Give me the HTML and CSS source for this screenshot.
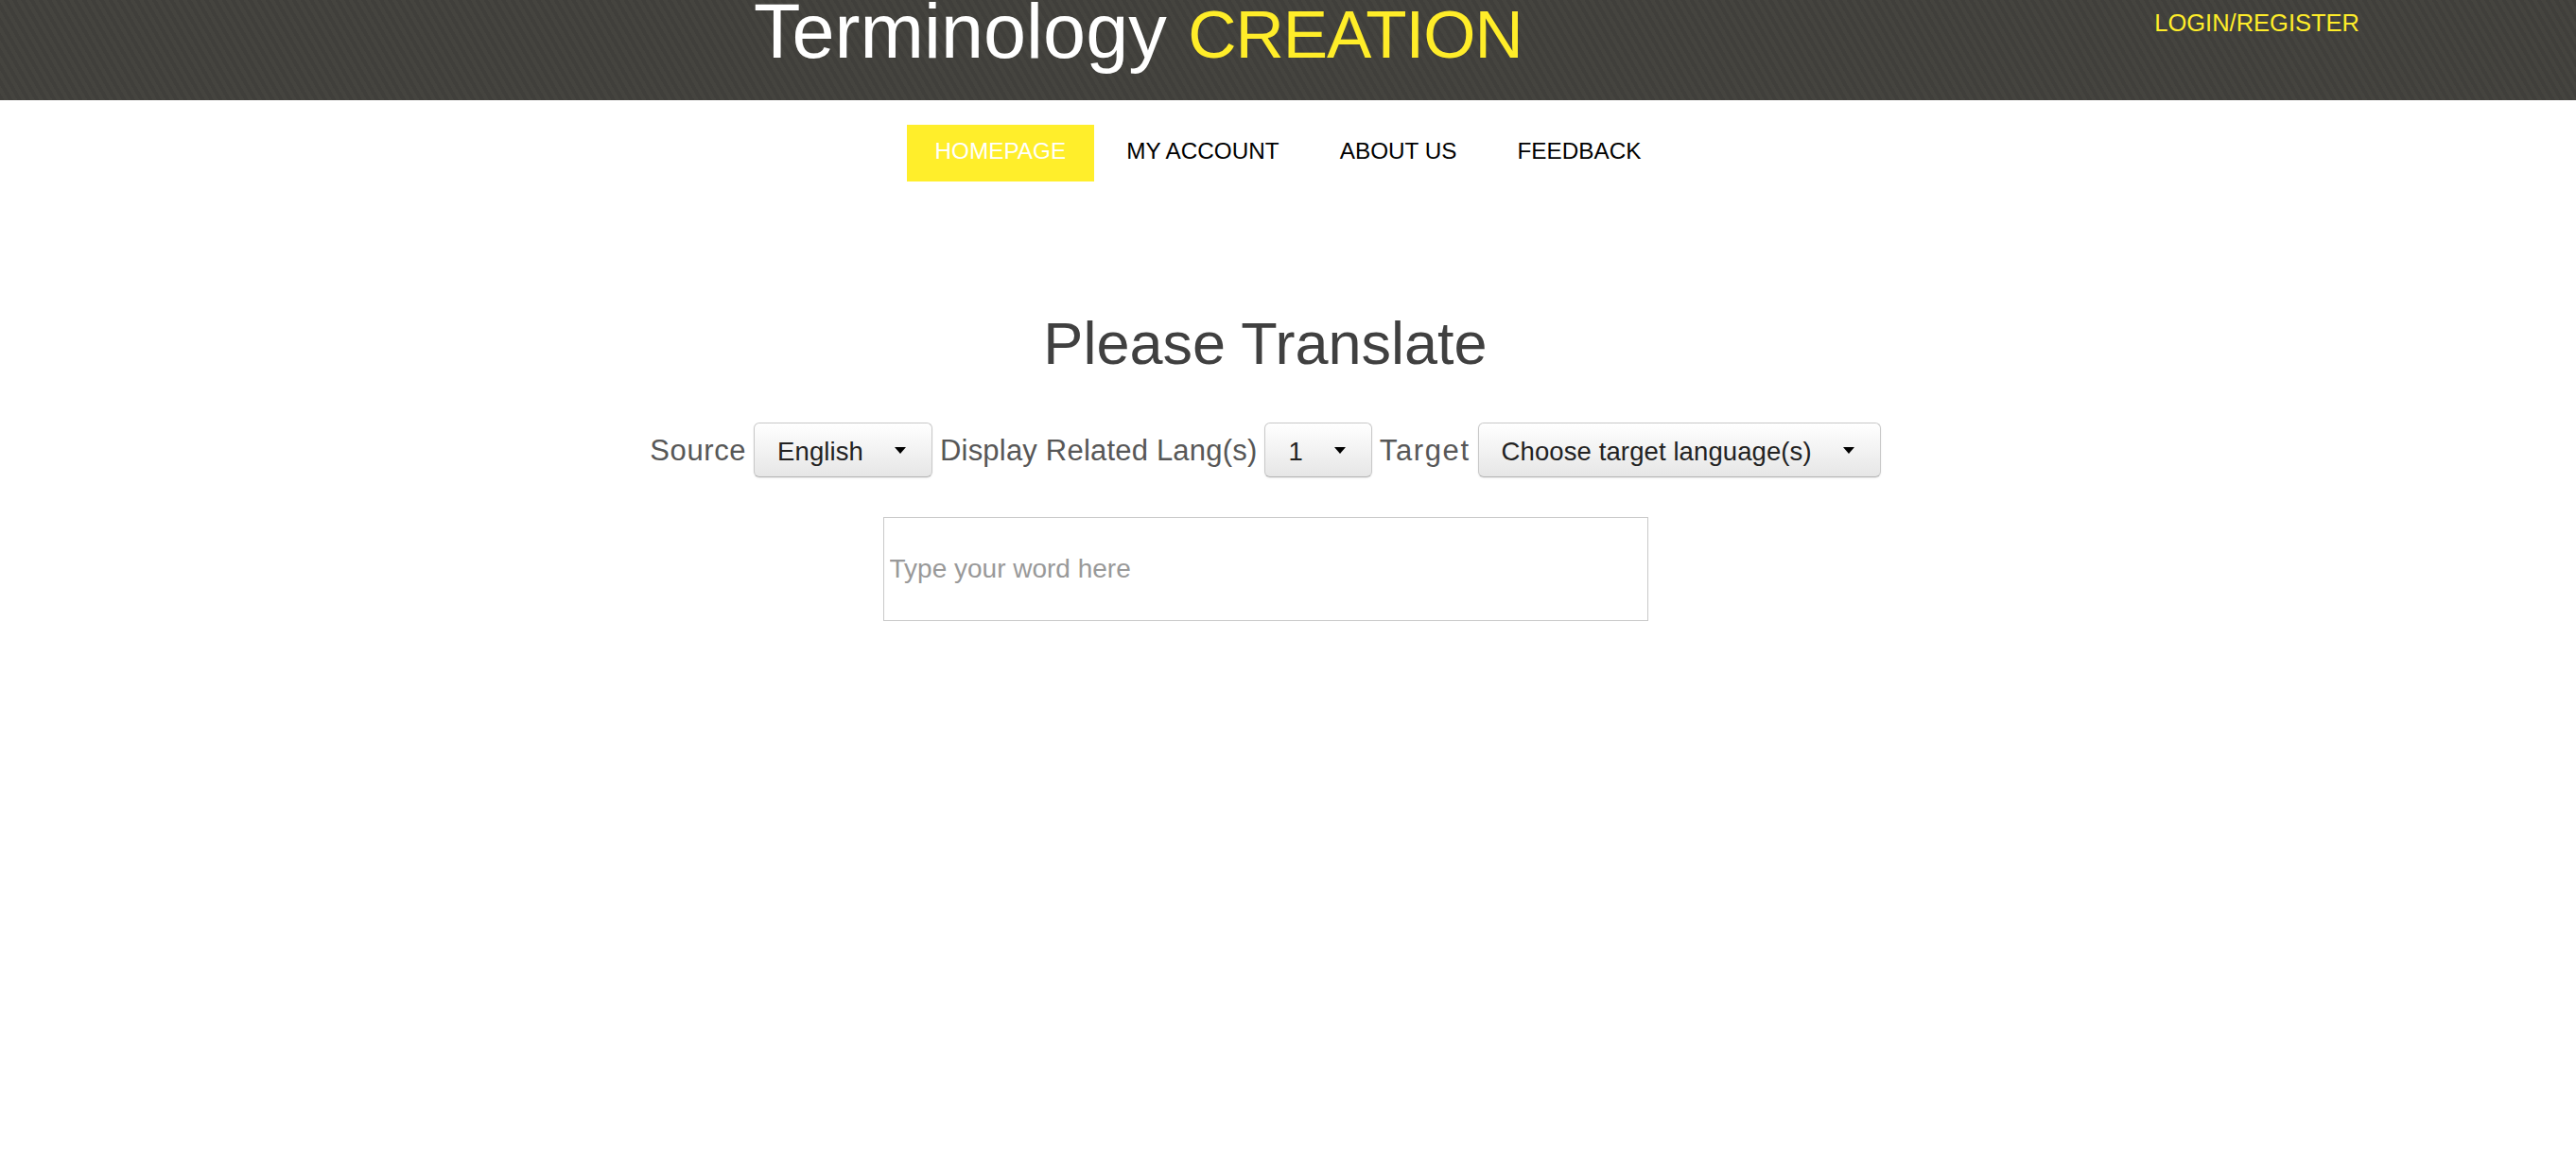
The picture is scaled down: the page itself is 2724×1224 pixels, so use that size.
FILE: index.html
```html
<!DOCTYPE html>
<html lang="en">
<head>
<meta charset="utf-8">
<title>Terminology CREATION</title>
<link rel="stylesheet" href="styles.css">
</head>
<body>
<header class="topbar">
  <div class="brand"><span class="brand-main">Terminology</span> <span class="brand-accent">CREATION</span></div>
  <a class="login" href="#">LOGIN/REGISTER</a>
</header>
<nav class="menu">
  <a class="menu-item active" href="#">HOMEPAGE</a>
  <a class="menu-item" href="#">MY ACCOUNT</a>
  <a class="menu-item" href="#">ABOUT US</a>
  <a class="menu-item" href="#">FEEDBACK</a>
</nav>
<main class="content">
  <h1 class="heading">Please Translate</h1>
  <div class="controls">
    <span class="label">Source</span>
    <button class="dropdown" type="button"><span class="dd-text">English</span><span class="caret"></span></button>
    <span class="label label-long">Display Related Lang(s)</span>
    <button class="dropdown" type="button"><span class="dd-text">1</span><span class="caret"></span></button>
    <span class="label label-target">Target</span>
    <button class="dropdown" type="button"><span class="dd-text">Choose target language(s)</span><span class="caret"></span></button>
  </div>
  <input class="word-input" type="text" placeholder="Type your word here">
</main>
</body>
</html>
```
FILE: styles.css
```css
html, body {
  margin: 0;
  padding: 0;
  background: #ffffff;
}

body {
  font-family: "Liberation Sans", Arial, sans-serif;
}

.topbar {
  height: 106px;
  overflow: hidden;
  display: flex;
  align-items: flex-start;
  padding-left: 797px;
  padding-right: 229px;
  background-color: #403f3b;
  background-image: repeating-linear-gradient(60deg, #403f3b 0px, #403f3b 4px, #45443f 4px, #45443f 8px);
}

.brand {
  font-size: 81px;
  line-height: 81px;
  margin-top: -7px;
  color: #ffffff;
  white-space: nowrap;
}

.brand-accent {
  font-size: 71px;
  letter-spacing: -1px;
  color: #ffed29;
}

.login {
  margin-left: auto;
  padding-top: 12px;
  font-size: 25.5px;
  line-height: 25.5px;
  color: #ffed29;
  text-decoration: none;
}

.menu {
  display: flex;
  justify-content: center;
  gap: 4px;
  margin-top: 26px;
}

.menu-item {
  display: block;
  height: 60px;
  box-sizing: border-box;
  padding: 0 30px 4px;
  line-height: 56px;
  font-size: 24.3px;
  color: #000000;
  text-decoration: none;
}

.menu-item.active {
  background: #ffee2b;
  color: #ffffff;
}

.content {
  display: flex;
  flex-direction: column;
  align-items: center;
  padding-right: 48px;
}

.heading {
  margin: 140px 0 0;
  font-size: 63px;
  line-height: 62px;
  font-weight: normal;
  color: #404040;
}

.controls {
  display: flex;
  align-items: baseline;
  gap: 8px;
  margin-top: 53px;
}

.label {
  font-size: 31px;
  letter-spacing: 0.6px;
  color: #575757;
}

.label-long {
  letter-spacing: 0.2px;
}

.label-target {
  letter-spacing: 1.6px;
}

.dropdown {
  display: inline-flex;
  align-items: center;
  box-sizing: border-box;
  height: 58px;
  margin: 0;
  padding: 0 27px 0 24px;
  border: 1px solid #c8c8c8;
  border-bottom-color: #b3b3b3;
  border-radius: 6px;
  background: linear-gradient(#ffffff, #e6e6e6);
  box-shadow: inset 0 1px 0 rgba(255,255,255,0.2), 0 1px 2px rgba(0,0,0,0.08);
  font-family: "Liberation Sans", Arial, sans-serif;
  font-size: 27.5px;
  line-height: 34px;
  letter-spacing: 0.1px;
  color: #222222;
}

.dd-text {
  display: inline-block;
  padding-top: 3px;
}

.caret {
  display: inline-block;
  width: 0;
  height: 0;
  margin-left: 33px;
  border-top: 7px solid #000000;
  border-left: 6.5px solid transparent;
  border-right: 6.5px solid transparent;
}

.word-input {
  display: block;
  box-sizing: border-box;
  width: 809px;
  height: 110px;
  margin: 42px 0 0;
  padding: 0 6px;
  border: 1px solid #c9c9c9;
  font-family: "Liberation Sans", Arial, sans-serif;
  font-size: 28px;
  color: #333333;
  background: #ffffff;
  outline: none;
}

.word-input::placeholder {
  color: #999999;
}
```
